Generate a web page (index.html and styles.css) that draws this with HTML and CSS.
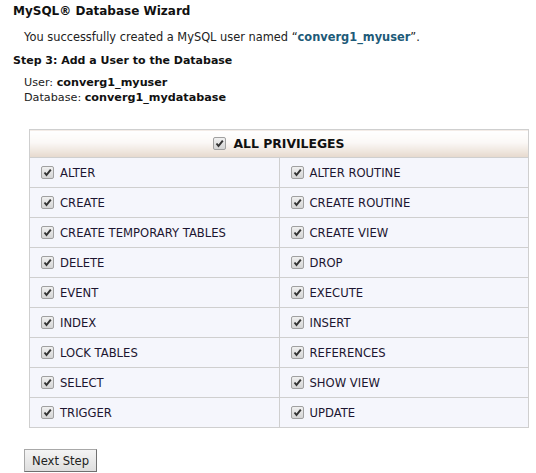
FILE: index.html
```html
<!DOCTYPE html>
<html>
<head>
<meta charset="utf-8">
<link rel="stylesheet" href="styles.css">
</head>
<body>
<div class="page">
  <h1 class="title">MySQL® Database Wizard</h1>
  <p class="msg">You successfully created a MySQL user named “<b class="uname">converg1_myuser</b>”.</p>
  <h2 class="step">Step 3: Add a User to the Database</h2>
  <div class="info">
    <div>User: <b>converg1_myuser</b></div>
    <div>Database: <b>converg1_mydatabase</b></div>
  </div>
  <table class="privs">
    <thead>
      <tr><th colspan="2"><span class="cb"></span>ALL PRIVILEGES</th></tr>
    </thead>
    <tbody>
      <tr><td><span class="cb"></span>ALTER</td><td><span class="cb"></span>ALTER ROUTINE</td></tr>
      <tr><td><span class="cb"></span>CREATE</td><td><span class="cb"></span>CREATE ROUTINE</td></tr>
      <tr><td><span class="cb"></span>CREATE TEMPORARY TABLES</td><td><span class="cb"></span>CREATE VIEW</td></tr>
      <tr><td><span class="cb"></span>DELETE</td><td><span class="cb"></span>DROP</td></tr>
      <tr><td><span class="cb"></span>EVENT</td><td><span class="cb"></span>EXECUTE</td></tr>
      <tr><td><span class="cb"></span>INDEX</td><td><span class="cb"></span>INSERT</td></tr>
      <tr><td><span class="cb"></span>LOCK TABLES</td><td><span class="cb"></span>REFERENCES</td></tr>
      <tr><td><span class="cb"></span>SELECT</td><td><span class="cb"></span>SHOW VIEW</td></tr>
      <tr><td><span class="cb"></span>TRIGGER</td><td><span class="cb"></span>UPDATE</td></tr>
    </tbody>
  </table>
  <button class="btn">Next Step</button>
</div>
</body>
</html>
```
FILE: styles.css
```css
html, body { margin: 0; padding: 0; background: #fff; }
body { font-family: "DejaVu Sans", Verdana, sans-serif; font-size: 11.4px; color: #333; }
.page { padding: 3px 8px 0 13px; }
.title { font-size: 12px; font-weight: bold; color: #111; margin: 0; line-height: 16px; }
.msg { margin: 11px 0 0 11px; line-height: 14px; color: #222; }
.uname { color: #1d5a78; }
.step { font-size: 11px; font-weight: bold; color: #111; margin: 9px 0 0 0; line-height: 16px; }
.info { margin: 6px 0 0 11px; line-height: 15px; color: #222; font-size: 11.2px; }
.info b { color: #111; }
.privs { margin: 24px 0 0 16px; width: 500px; border-collapse: collapse; border: 1px solid #cfcfcf; }
.privs th { height: 27px; padding: 0; font-size: 12.4px; font-weight: bold; color: #111; text-align: center;
  background: linear-gradient(#ffffff 0%, #fbf8f6 45%, #e6d9cd 100%); border: 1px solid #cfcfcf; }
.privs td { height: 29px; padding: 0 0 0 11px; width: 50%; background: #f5f6fc; border: 1px solid #cfcfcf; color: #1c1530; vertical-align: middle; font-size: 11.6px; }
.cb { display: inline-block; box-sizing: border-box; width: 13px; height: 13px; border: 1px solid #a0a0a0; border-radius: 2px; margin-right: 6px; vertical-align: -2px;
  background: url("data:image/svg+xml,%3Csvg xmlns='http://www.w3.org/2000/svg' width='11' height='11'%3E%3Cpath d='M2.5 5.5 L4.5 8 L8.8 2.6' fill='none' stroke='%23333' stroke-width='2'/%3E%3C/svg%3E") no-repeat center, linear-gradient(#f0f0f0, #d4d4d4); }
.privs th .cb { margin-right: 7px; }
.btn { display: block; box-sizing: border-box; height: 23px; margin: 21px 0 0 11px; font-family: "DejaVu Sans", Verdana, sans-serif; font-size: 11.6px; color: #222; padding: 0 7px;
  background: linear-gradient(#f4f4f4, #dedede); border: 1px solid #a8a8a8; border-right-color: #707070; border-bottom-color: #707070; border-radius: 0; }
```
